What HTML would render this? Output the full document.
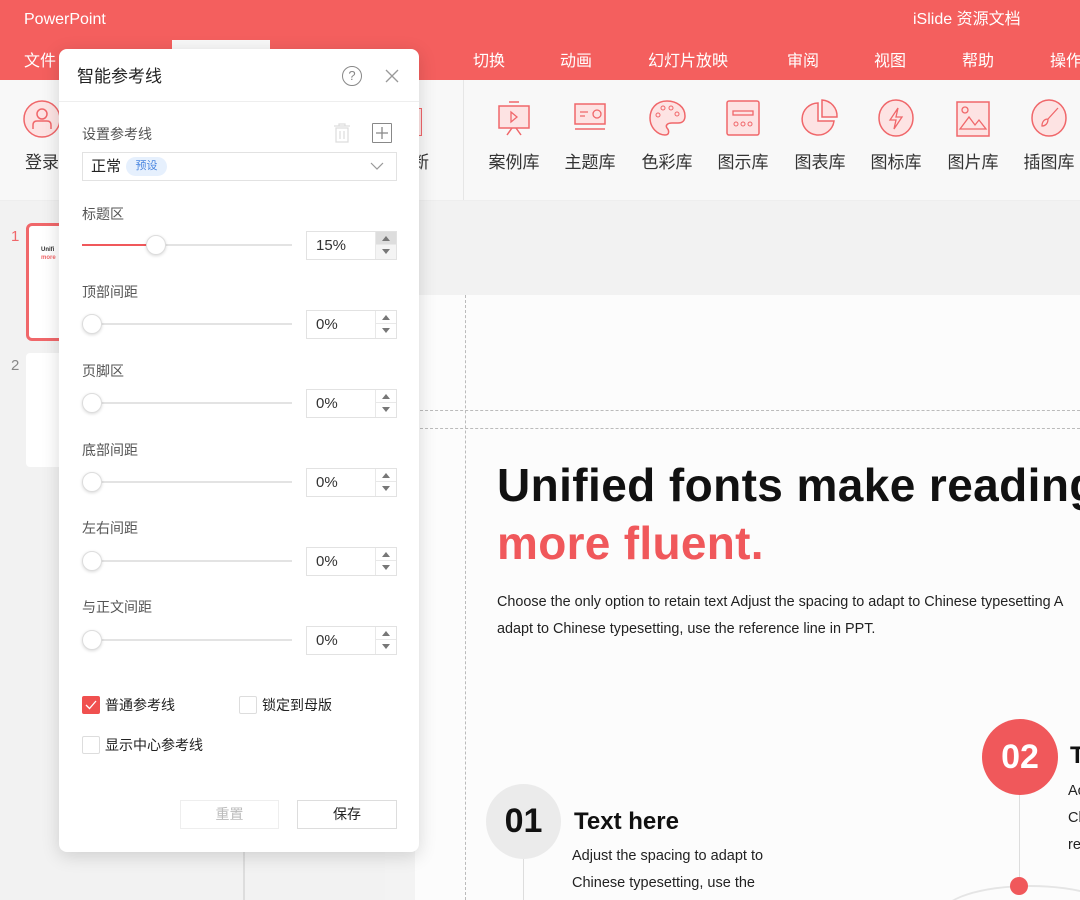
<!DOCTYPE html>
<html><head><meta charset="utf-8"><style>
*{margin:0;padding:0;box-sizing:border-box}
html{width:1080px;height:900px;overflow:hidden}
body{width:1080px;height:900px;overflow:hidden;position:relative;background:#f2f2f2;font-family:"Liberation Sans","Noto Sans CJK SC",sans-serif;color:#333}
div{line-height:1.2;white-space:nowrap}
.abs{position:absolute}
.top{left:0;top:0;width:1080px;height:80px;background:#f45f5e}
.top .t{color:#fff;font-size:16px;position:absolute;line-height:20px}
.rib{left:0;top:80px;width:1080px;height:121px;background:#f8f8f8;border-bottom:1px solid #eee}
.lab{position:absolute;top:152px;font-size:17px;color:#333;width:76px;text-align:center;line-height:22px}
.ic{position:absolute;top:99px}
.dlg{left:59px;top:49px;width:360px;height:803px;background:#fff;border-radius:8px;box-shadow:0 4px 18px rgba(0,0,0,.15)}
.lbl{position:absolute;left:23px;font-size:14px;color:#555;line-height:18px}
.track{position:absolute;left:23px;width:210px;height:2px;background:#e3e3e3}
.knob{position:absolute;width:20px;height:20px;border-radius:50%;background:#fff;border:1px solid #ddd;box-shadow:0 1px 3px rgba(0,0,0,.15)}
.inp{position:absolute;left:247px;width:91px;height:29px;border:1px solid #e2e2e2;font-size:15px;color:#333;padding:0 0 0 9px;line-height:27px}
.sp{position:absolute;right:0;top:0;width:21px;height:27px;border-left:1px solid #e8e8e8}
.sp i{display:block;height:13px;position:relative}
.sp i:first-child{border-bottom:1px solid #e8e8e8}
.sp i:after{content:"";position:absolute;left:6px;top:4px;border-left:4px solid transparent;border-right:4px solid transparent}
.sp i.u:after{border-bottom:5px solid #777}
.sp i.d:after{border-top:5px solid #777}
.cb{position:absolute;width:18px;height:18px;border:1px solid #ddd;border-radius:2px;background:#fff}
.ck{position:absolute;font-size:14px;color:#222;line-height:18px}
</style></head><body>
<div class="abs top">
 <div class="t" style="left:24px;top:10px">PowerPoint</div>
 <div class="t" style="left:913px;top:10px">iSlide 资源文档</div>
 <div class="t" style="left:24px;top:52px">文件</div>
 <div class="abs" style="left:172px;top:40px;width:98px;height:40px;background:#f8f8f8"></div>
 <div class="t" style="left:473px;top:52px">切换</div>
 <div class="t" style="left:560px;top:52px">动画</div>
 <div class="t" style="left:648px;top:52px">幻灯片放映</div>
 <div class="t" style="left:787px;top:52px">审阅</div>
 <div class="t" style="left:874px;top:52px">视图</div>
 <div class="t" style="left:962px;top:52px">帮助</div>
 <div class="t" style="left:1050px;top:52px">操作</div>
</div>
<div class="abs rib">
 <svg class="ic" style="left:22px;top:19px" width="40" height="40"><circle cx="20" cy="20" r="18" fill="#fde3e3" stroke="#f0676a" stroke-width="1.5"/><circle cx="20" cy="15" r="5" fill="none" stroke="#f0676a" stroke-width="1.5"/><path d="M11 30v-4q0-4 4-4h10q4 0 4 4v4" fill="none" stroke="#f0676a" stroke-width="1.5"/></svg>
 <div class="lab" style="left:4px;top:72px">登录</div>
 <div class="abs" style="left:404px;top:28px;width:18px;height:28px;border:1.5px solid #f0676a;border-left:none;background:#fde3e3"></div>
 <div class="lab" style="left:412px;top:72px;width:40px;text-align:left">断</div>
 <div class="abs" style="left:463px;top:0;width:1px;height:120px;background:#e6e6e6"></div>
</div>
<svg class="ic" style="left:496px" width="36" height="40"><path d="M13 3h10" stroke="#f0676a" stroke-width="1.5"/><rect x="3" y="7" width="30" height="22" fill="#fde3e3" stroke="#f0676a" stroke-width="1.5"/><path d="M15 13l6 5-6 5z" fill="none" stroke="#f0676a" stroke-width="1.3"/><path d="M11 36l5-7M25 36l-5-7" stroke="#f0676a" stroke-width="1.5"/></svg>
<svg class="ic" style="left:572px" width="36" height="40"><rect x="3" y="5" width="30" height="20" fill="#fde3e3" stroke="#f0676a" stroke-width="1.5"/><path d="M8 13h8M8 17h5" stroke="#f0676a" stroke-width="1.3"/><circle cx="25" cy="15" r="4" fill="none" stroke="#f0676a" stroke-width="1.3"/><path d="M3 30h30" stroke="#f0676a" stroke-width="1.5"/></svg>
<svg class="ic" style="left:648px" width="38" height="40"><path d="M19 2C8 2 2 10 2 19c0 10 8 17 15 17 5 0 4-5 2-7-2-3 1-5 5-5h6c5 0 7-3 7-7C37 8 29 2 19 2z" fill="#fde3e3" stroke="#f0676a" stroke-width="1.5"/><circle cx="10" cy="16" r="2" fill="none" stroke="#f0676a"/><circle cx="15" cy="9" r="2" fill="none" stroke="#f0676a"/><circle cx="23" cy="9" r="2" fill="none" stroke="#f0676a"/><circle cx="29" cy="15" r="2" fill="none" stroke="#f0676a"/></svg>
<svg class="ic" style="left:725px" width="36" height="40"><rect x="2" y="2" width="32" height="34" rx="2" fill="#fde3e3" stroke="#f0676a" stroke-width="1.5"/><rect x="8" y="12" width="20" height="4" fill="none" stroke="#f0676a" stroke-width="1.3"/><circle cx="11" cy="25" r="2" fill="none" stroke="#f0676a"/><circle cx="18" cy="25" r="2" fill="none" stroke="#f0676a"/><circle cx="25" cy="25" r="2" fill="none" stroke="#f0676a"/></svg>
<svg class="ic" style="left:801px" width="38" height="40"><path d="M17 4a16 16 0 1 0 16 18H17z" fill="#fde3e3" stroke="#f0676a" stroke-width="1.5"/><path d="M21 1v17h15A16 16 0 0 0 21 1z" fill="#fde3e3" stroke="#f0676a" stroke-width="1.5"/></svg>
<svg class="ic" style="left:877px" width="38" height="40"><ellipse cx="19" cy="19" rx="17" ry="18" fill="#fde3e3" stroke="#f0676a" stroke-width="1.5"/><path d="M21 9l-8 12h6l-2 9 8-12h-6z" fill="none" stroke="#f0676a" stroke-width="1.3"/></svg>
<svg class="ic" style="left:955px" width="36" height="40"><rect x="2" y="3" width="32" height="34" fill="#fde3e3" stroke="#f0676a" stroke-width="1.5"/><circle cx="10" cy="11" r="3" fill="none" stroke="#f0676a" stroke-width="1.3"/><path d="M5 30l9-12 6 8 4-5 7 9z" fill="none" stroke="#f0676a" stroke-width="1.3"/></svg>
<svg class="ic" style="left:1030px" width="38" height="40"><ellipse cx="19" cy="19" rx="17" ry="18" fill="#fde3e3" stroke="#f0676a" stroke-width="1.5"/><path d="M28 9l-10 11M18 20c-4 0-6 3-6 7 3 0 6-2 6-7z" fill="none" stroke="#f0676a" stroke-width="1.3"/></svg>
<div class="lab" style="left:476px">案例库</div>
<div class="lab" style="left:552px">主题库</div>
<div class="lab" style="left:629px">色彩库</div>
<div class="lab" style="left:705px">图示库</div>
<div class="lab" style="left:782px">图表库</div>
<div class="lab" style="left:858px">图标库</div>
<div class="lab" style="left:935px">图片库</div>
<div class="lab" style="left:1011px">插图库</div>

<div class="abs" style="left:0;top:201px;width:385px;height:699px;background:#f2f2f2"></div>
<div class="abs" style="left:243px;top:852px;width:2px;height:48px;background:#ddd"></div>
<div class="abs" style="left:11px;top:228px;color:#f0676a;font-size:15px">1</div>
<div class="abs" style="left:26px;top:223px;width:40px;height:118px;border:3px solid #f0676a;border-radius:6px;background:#fff"></div>
<div class="abs" style="left:41px;top:247px;font-size:6px;font-weight:bold">Unifi</div>
<div class="abs" style="left:41px;top:255px;font-size:6px;font-weight:bold;color:#f0676a">more</div>
<div class="abs" style="left:11px;top:357px;color:#888;font-size:15px">2</div>
<div class="abs" style="left:26px;top:353px;width:40px;height:114px;background:#fff;border-radius:4px"></div>

<div class="abs" style="left:385px;top:201px;width:30px;height:699px;background:#f3f3f3"></div>
<div class="abs" style="left:415px;top:295px;width:665px;height:605px;background:#fcfcfc;overflow:hidden">
 <div class="abs" style="left:50px;top:0;height:605px;border-left:1px dashed #bbb"></div>
 <div class="abs" style="left:0;top:115px;width:665px;border-top:1px dashed #bbb"></div>
 <div class="abs" style="left:0;top:133px;width:665px;border-top:1px dashed #bbb"></div>
 <div class="abs" style="left:82px;top:163px;font-size:46px;font-weight:bold;color:#111;letter-spacing:.4px">Unified fonts make reading</div>
 <div class="abs" style="left:82px;top:221px;font-size:46px;font-weight:bold;color:#f0585b;letter-spacing:.3px">more fluent.</div>
 <div class="abs" style="left:82px;top:294px;font-size:14.4px;color:#222;line-height:27px">Choose the only option to retain text Adjust the spacing to adapt to Chinese typesetting A<br>adapt to Chinese typesetting, use the reference line in PPT.</div>
 <div class="abs" style="left:108px;top:560px;width:1px;height:45px;background:#ddd"></div>
 <div class="abs" style="left:71px;top:489px;width:75px;height:75px;border-radius:50%;background:#ebebeb;color:#111;font-size:34px;font-weight:bold;text-align:center;line-height:75px">01</div>
 <div class="abs" style="left:159px;top:513px;font-size:24px;font-weight:bold;color:#111">Text here</div>
 <div class="abs" style="left:157px;top:548px;font-size:14.5px;color:#222;line-height:27px">Adjust the spacing to adapt to<br>Chinese typesetting, use the</div>
 <div class="abs" style="left:604px;top:495px;width:1px;height:95px;background:#ddd"></div>
 <div class="abs" style="left:567px;top:424px;width:76px;height:76px;border-radius:50%;background:#f0585b;color:#fff;font-size:34px;font-weight:bold;text-align:center;line-height:76px">02</div>
 <div class="abs" style="left:655px;top:447px;font-size:24px;font-weight:bold;color:#111">T</div>
 <div class="abs" style="left:653px;top:483px;font-size:14.5px;color:#222;line-height:27px">Ac<br>Cl<br>re</div>
 <div class="abs" style="left:525px;top:590px;width:180px;height:60px;border:2px solid #e5e5e5;border-radius:50%"></div>
 <div class="abs" style="left:595px;top:582px;width:18px;height:18px;border-radius:50%;background:#f0585b"></div>
</div>

<div class="abs dlg">
 <div class="abs" style="left:18px;top:17px;font-size:17px;color:#222;line-height:22px">智能参考线</div>
 <div class="abs" style="left:283px;top:17px;width:20px;height:20px;border:1px solid #888;border-radius:50%;font-size:13px;color:#888;text-align:center;line-height:18px">?</div>
 <svg class="abs" style="left:326px;top:20px" width="14" height="14"><path d="M1 1l12 12M13 1L1 13" stroke="#999" stroke-width="1.3"/></svg>
 <div class="abs" style="left:0;top:52px;width:360px;height:1px;background:#eee"></div>
 <div class="lbl" style="top:76px">设置参考线</div>
 <svg class="abs" style="left:274px;top:74px" width="18" height="20"><path d="M1 3h16M6 3V1h6v2M3 5h12v14H3zM7 8v8M11 8v8" fill="none" stroke="#ddd" stroke-width="1.2"/></svg>
 <div class="abs" style="left:313px;top:74px;width:20px;height:20px;border:1px solid #888;border-radius:1px"></div>
 <svg class="abs" style="left:313px;top:74px" width="20" height="20"><path d="M10 4v12M4 10h12" stroke="#888" stroke-width="1.3"/></svg>
 <div class="abs" style="left:23px;top:103px;width:315px;height:29px;border:1px solid #e2e2e2"></div>
 <div class="abs" style="left:32px;top:108px;font-size:15px;color:#222;line-height:20px">正常</div>
 <div class="abs" style="left:67px;top:108px;width:41px;height:19px;border-radius:10px;background:#e6f0fd;color:#4a86e0;font-size:11px;text-align:center;line-height:19px">预设</div>
 <svg class="abs" style="left:311px;top:113px" width="14" height="9"><path d="M1 1l6 6 6-6" fill="none" stroke="#999" stroke-width="1.2"/></svg>

 <div class="lbl" style="top:156px">标题区</div>
 <div class="track" style="top:195px"></div><div class="abs" style="left:23px;top:195px;width:74px;height:2px;background:#f0585b"></div>
 <div class="knob" style="left:87px;top:186px"></div>
 <div class="inp" style="top:182px">15%<div class="sp" style="background:#f4f4f4"><i class="u" style="background:#ddd"></i><i class="d"></i></div></div>

 <div class="lbl" style="top:234px">顶部间距</div>
 <div class="track" style="top:274px"></div><div class="knob" style="left:23px;top:265px"></div>
 <div class="inp" style="top:261px">0%<div class="sp"><i class="u"></i><i class="d"></i></div></div>

 <div class="lbl" style="top:313px">页脚区</div>
 <div class="track" style="top:353px"></div><div class="knob" style="left:23px;top:344px"></div>
 <div class="inp" style="top:340px">0%<div class="sp"><i class="u"></i><i class="d"></i></div></div>

 <div class="lbl" style="top:392px">底部间距</div>
 <div class="track" style="top:432px"></div><div class="knob" style="left:23px;top:423px"></div>
 <div class="inp" style="top:419px">0%<div class="sp"><i class="u"></i><i class="d"></i></div></div>

 <div class="lbl" style="top:470px">左右间距</div>
 <div class="track" style="top:511px"></div><div class="knob" style="left:23px;top:502px"></div>
 <div class="inp" style="top:498px">0%<div class="sp"><i class="u"></i><i class="d"></i></div></div>

 <div class="lbl" style="top:549px">与正文间距</div>
 <div class="track" style="top:590px"></div><div class="knob" style="left:23px;top:581px"></div>
 <div class="inp" style="top:577px">0%<div class="sp"><i class="u"></i><i class="d"></i></div></div>

 <div class="cb" style="left:23px;top:647px;background:#f0504f;border-color:#f0504f"></div>
 <svg class="abs" style="left:26px;top:651px" width="12" height="10"><path d="M1 5l3.5 3.5L11 1" fill="none" stroke="#fff" stroke-width="1.3"/></svg>
 <div class="ck" style="left:46px;top:647px">普通参考线</div>
 <div class="cb" style="left:180px;top:647px"></div>
 <div class="ck" style="left:203px;top:647px">锁定到母版</div>
 <div class="cb" style="left:23px;top:687px"></div>
 <div class="ck" style="left:46px;top:687px">显示中心参考线</div>

 <div class="abs" style="left:121px;top:751px;width:99px;height:29px;border:1px solid #eee;color:#bbb;font-size:14px;text-align:center;line-height:27px">重置</div>
 <div class="abs" style="left:238px;top:751px;width:100px;height:29px;border:1px solid #ddd;color:#222;font-size:14px;text-align:center;line-height:27px">保存</div>
</div>
</body></html>
